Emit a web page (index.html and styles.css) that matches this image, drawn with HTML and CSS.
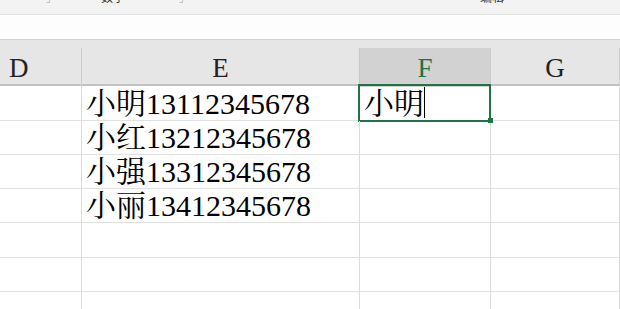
FILE: index.html
```html
<!DOCTYPE html>
<html lang="zh-CN">
<head>
  <meta charset="UTF-8">
  <title>工作簿1 - Excel</title>
  <link rel="stylesheet" href="styles.css">
</head>
<body>
  <div class="ribbon">
    <span class="launcher l1">⌟</span>
    <span class="group-name g1">数字</span>
    <span class="launcher l2">⌟</span>
    <span class="group-name g2">编辑</span>
  </div>
  <div class="formula-bar"></div>

  <div class="sheet">
    <div class="col-heads">
      <div class="col-head col-d">D</div>
      <div class="col-head">E</div>
      <div class="col-head active">F</div>
      <div class="col-head">G</div>
    </div>

    <div class="grid">
      <div class="cell"></div>
      <div class="cell">小明13112345678</div>
      <div class="cell editing">小明<span class="caret"></span></div>
      <div class="cell"></div>

      <div class="cell"></div>
      <div class="cell">小红13212345678</div>
      <div class="cell"></div>
      <div class="cell"></div>

      <div class="cell"></div>
      <div class="cell">小强13312345678</div>
      <div class="cell"></div>
      <div class="cell"></div>

      <div class="cell"></div>
      <div class="cell">小丽13412345678</div>
      <div class="cell"></div>
      <div class="cell"></div>

      <div class="cell"></div>
      <div class="cell"></div>
      <div class="cell"></div>
      <div class="cell"></div>

      <div class="cell"></div>
      <div class="cell"></div>
      <div class="cell"></div>
      <div class="cell"></div>

      <div class="cell"></div>
      <div class="cell"></div>
      <div class="cell"></div>
      <div class="cell"></div>
    </div>
  </div>
</body>
</html>
```

FILE: styles.css
```css
body {
  margin: 0;
  width: 620px;
  height: 309px;
  overflow: hidden;
  background: #ffffff;
  font-family: "Liberation Serif", "Noto Serif CJK SC", "Noto Sans CJK SC", serif;
}

/* bottom edge of the ribbon, labels cut off at the top */
.ribbon {
  height: 14px;
  background: #f3f3f3;
  border-bottom: 1px solid #e2e2e2;
  overflow: hidden;
  display: flex;
  align-items: flex-end;
  font-family: "Noto Sans CJK SC", sans-serif;
}

.group-name {
  font-size: 12px;
  line-height: 12px;
  margin-bottom: 11px;
  color: #333;
}

.launcher {
  font-size: 10px;
  line-height: 10px;
  margin-bottom: 11px;
  color: #b5b5b5;
}

.l1 { margin-left: 46px; }
.g1 { margin-left: 50px; }
.l2 { margin-left: 54px; }
.g2 { margin-left: 296px; }

.formula-bar {
  height: 24px;
  background: #fdfdfd;
  border-bottom: 1px solid #d2d2d2;
}

.sheet {
  background: #e6e6e6;
  padding-top: 8px;
}

/* column letters */
.col-heads {
  display: grid;
  grid-template-columns: 82px 278px 131px 1fr;
  height: 38px;
  border-bottom: 2px solid #c2c2c2;
  box-sizing: border-box;
}

.col-head {
  border-right: 1px solid #cdcdcd;
  text-align: center;
  font-size: 27px;
  line-height: 37px;
  padding-top: 2px;
  box-sizing: border-box;
  color: #222;
}

.col-d {
  text-align: left;
  padding-left: 9px;
}

.col-head.active {
  background: #d2d2d2;
  color: #217346;
  border-left: 1px solid #c6c6c6;
  margin-left: -1px;
}

/* cells */
.grid {
  display: grid;
  grid-template-columns: 82px 278px 131px 1fr;
  grid-template-rows: 35px 34px 34px 34px 35px 34px 34px;
  background: #ffffff;
}

.cell {
  position: relative;
  box-sizing: border-box;
  border-right: 1px solid #dcdcdc;
  border-bottom: 1px solid #e1e1e1;
  padding: 0 0 1px 4px;
  display: flex;
  align-items: flex-end;
  font-size: 30px;
  line-height: 30px;
  color: #000;
  white-space: nowrap;
}

.cell.editing::after {
  content: '';
  position: absolute;
  top: -2px;
  left: -2px;
  right: -1px;
  bottom: -2px;
  border: 2px solid #217346;
}

.cell.editing::before {
  content: '';
  position: absolute;
  right: -3px;
  bottom: -3px;
  width: 5px;
  height: 5px;
  background: #217346;
  z-index: 1;
}

.caret {
  display: inline-block;
  width: 0;
  height: 31px;
  border-left: 1.5px solid #000;
  margin-left: 0;
  margin-bottom: 1px;
}
```
